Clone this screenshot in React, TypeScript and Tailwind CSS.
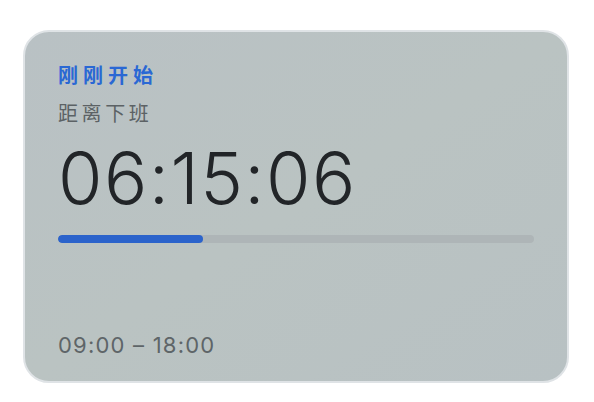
import React from 'react';

const font = 'Inter, "Noto Sans CJK SC", sans-serif';

export default function App() {
  const progress = 30.5; // 已过时间占比

  return (
    <div className="w-[594px] h-[402px] bg-white pt-[30px] pl-[23px]" style={{ fontFamily: font }}>
      <div className="w-[546px] h-[353px] rounded-[26px] border-2 border-[#dfe3e6] bg-gradient-to-br from-[#b9c1c4] via-[#bac3c2] to-[#b8c1c3] flex flex-col px-[33px] pt-[32px] pb-[24px]">
        <div className="text-[20px] font-bold tracking-[0.25em] text-[#2a68d4] leading-[24px]">刚刚开始</div>
        <div className="mt-[14px] text-[20px] tracking-[0.18em] text-[#5c6265] leading-[24px]">距离下班</div>
        <div className="mt-[12px] text-[72px] font-light text-[#222528] leading-[80px] tracking-[0.02em]">06:15:06</div>
        <div className="mt-[17px] h-[8px] w-full rounded-full bg-[#aeb5b7] overflow-hidden">
          <div className="h-full rounded-full bg-[#2b63cb]" style={{ width: `${progress}%` }} />
        </div>
        <div className="mt-auto text-[22px] text-[#5e6568] leading-[24px] tracking-[0.055em]">09:00 – 18:00</div>
      </div>
    </div>
  );
}
